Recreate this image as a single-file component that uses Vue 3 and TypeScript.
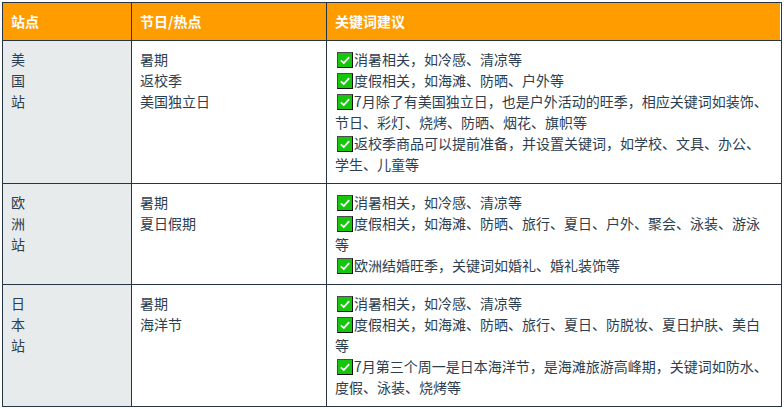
<script setup lang="ts">
interface Row { station: string[]; events: string[]; lines: string[] }

const rows: Row[] = [
  {
    station: ['美', '国', '站'],
    events: ['暑期', '返校季', '美国独立日'],
    lines: [
      '消暑相关，如冷感、清凉等',
      '度假相关，如海滩、防晒、户外等',
      '7月除了有美国独立日，也是户外活动的旺季，相应关键词如装饰、节日、彩灯、烧烤、防晒、烟花、旗帜等',
      '返校季商品可以提前准备，并设置关键词，如学校、文具、办公、学生、儿童等',
    ],
  },
  {
    station: ['欧', '洲', '站'],
    events: ['暑期', '夏日假期'],
    lines: [
      '消暑相关，如冷感、清凉等',
      '度假相关，如海滩、防晒、旅行、夏日、户外、聚会、泳装、游泳等',
      '欧洲结婚旺季，关键词如婚礼、婚礼装饰等',
    ],
  },
  {
    station: ['日', '本', '站'],
    events: ['暑期', '海洋节'],
    lines: [
      '消暑相关，如冷感、清凉等',
      '度假相关，如海滩、防晒、旅行、夏日、防脱妆、夏日护肤、美白等',
      '7月第三个周一是日本海洋节，是海滩旅游高峰期，关键词如防水、度假、泳装、烧烤等',
    ],
  },
]
</script>

<template>
  <div class="page">
    <table class="sheet">
      <colgroup>
        <col class="c1" />
        <col class="c2" />
        <col class="c3" />
      </colgroup>
      <thead>
        <tr>
          <th>站点</th>
          <th>节日/热点</th>
          <th class="last">关键词建议</th>
        </tr>
      </thead>
      <tbody>
        <tr v-for="(row, i) in rows" :key="i">
          <td class="station">
            <div v-for="s in row.station" :key="s">{{ s }}</div>
          </td>
          <td>
            <div v-for="e in row.events" :key="e">{{ e }}</div>
          </td>
          <td>
            <div v-for="(l, j) in row.lines" :key="j">
              <svg class="check" viewBox="0 0 16 16" aria-hidden="true">
                <rect width="16" height="16" fill="#4a4a4a" />
                <path d="M16 0V16H0L1 15H15V1Z" fill="#111" />
                <rect x="1" y="1" width="14" height="14" fill="#16c60c" />
                <path d="M3.8 8.4 L6.8 11 L12.2 5.2" fill="none" stroke="#fff" stroke-width="1.8" />
              </svg>{{ l }}
            </div>
          </td>
        </tr>
      </tbody>
    </table>
  </div>
</template>

<style scoped>
.page {
  padding: 2px 2px 0 2px;
  width: 780px;
}
.sheet {
  width: 780px;
  table-layout: fixed;
  border-collapse: collapse;
  font-family: "Noto Sans CJK SC", sans-serif;
  font-size: 14px;
  line-height: 21px;
  color: #2c3e50;
}
.c1 { width: 129px; }
.c2 { width: 195px; }
.sheet th,
.sheet td {
  border: 1px solid #253545;
  text-align: left;
  vertical-align: top;
  padding: 8px;
}
.sheet th {
  background: #ff9c00;
  color: #fff;
  font-weight: 700;
}
.sheet th.last {
  box-shadow: inset -1px 0 0 #fff;
}
.station {
  background: #e8ebec;
}
.check {
  display: inline-block;
  width: 16px;
  height: 16px;
  margin: 0 1px 0 2px;
  vertical-align: -3px;
}
</style>
